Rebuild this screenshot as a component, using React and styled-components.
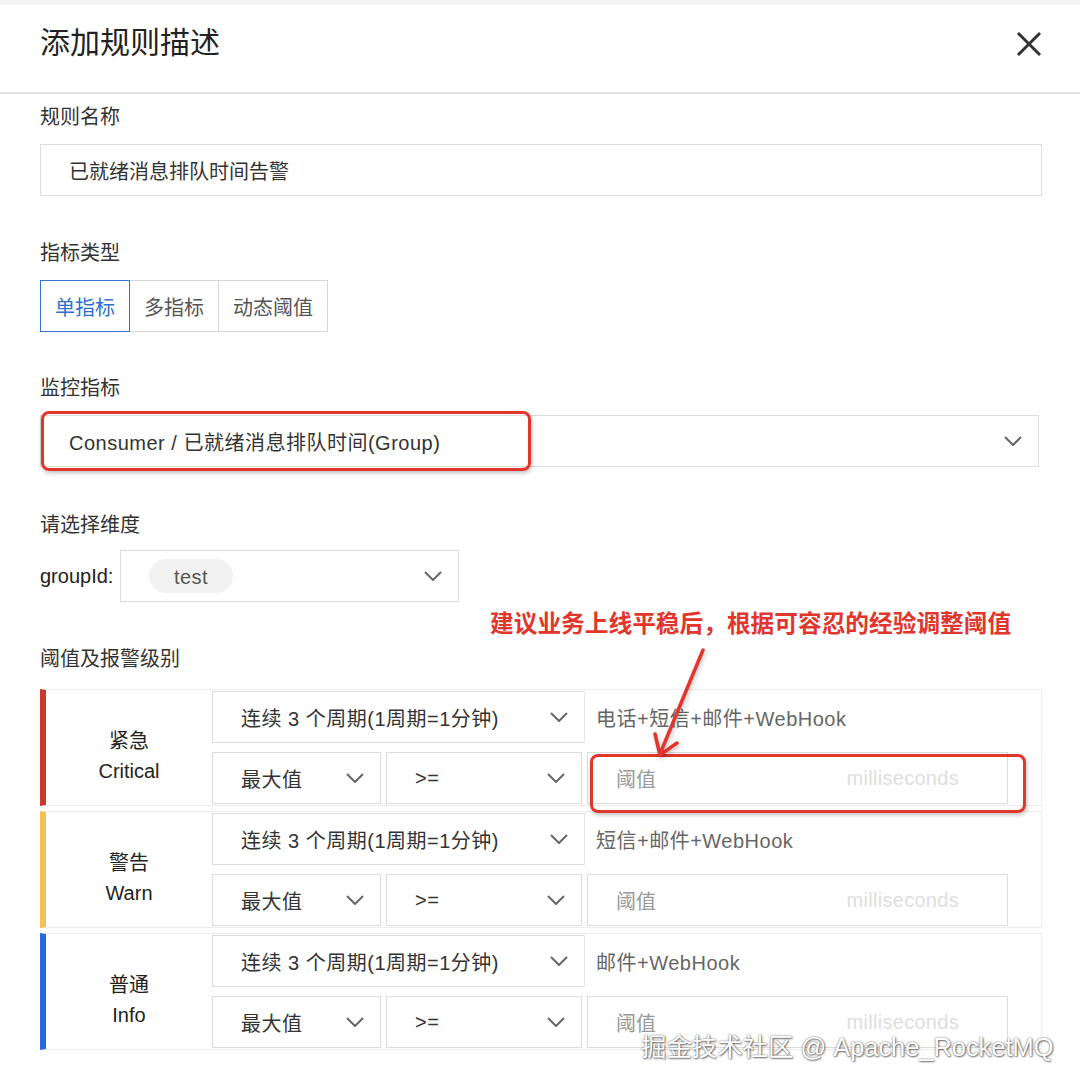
import React from "react";
import styled, { createGlobalStyle } from "styled-components";

const GlobalStyle = createGlobalStyle`
  body {
    margin: 0;
    background: #fff;
    font-family: "Liberation Sans", "Noto Sans CJK SC", sans-serif;
    color: #333;
  }
`;

const levels = [
  { cn: "紧急", en: "Critical", color: "#c73a30", notify: "电话+短信+邮件+WebHook" },
  { cn: "警告", en: "Warn", color: "#f4c158", notify: "短信+邮件+WebHook" },
  { cn: "普通", en: "Info", color: "#2b67dd", notify: "邮件+WebHook" },
];

const Chevron = () => (
  <svg width="18" height="10" viewBox="0 0 18 10">
    <polyline points="1,1 9,9 17,1" fill="none" stroke="#666" strokeWidth="2" />
  </svg>
);

const App = () => {
  return (
    <Page>
      <GlobalStyle />
      <TopStrip />
      <Header>
        <Title>添加规则描述</Title>
        <svg width="26" height="26" viewBox="0 0 26 26">
          <path d="M2 2 L24 24 M24 2 L2 24" stroke="#333" strokeWidth="3" />
        </svg>
      </Header>
      <Body>
        <Field $top={10}>
          <Label>规则名称</Label>
          <TextInput>已就绪消息排队时间告警</TextInput>
        </Field>

        <Field>
          <Label>指标类型</Label>
          <Segments>
            <Segment $active>单指标</Segment>
            <Segment>多指标</Segment>
            <Segment>动态阈值</Segment>
          </Segments>
        </Field>

        <Field $top={43}>
          <Label>监控指标</Label>
          <Select $width="999px">
            <span>Consumer / 已就绪消息排队时间(Group)</span>
            <Chevron />
          </Select>
        </Field>

        <Field $top={45}>
          <Label>请选择维度</Label>
          <DimRow>
            <DimLabel>groupId:</DimLabel>
            <Select $width="339px">
              <Tag>test</Tag>
              <Chevron />
            </Select>
          </DimRow>
        </Field>

        <Field>
          <Label>阈值及报警级别</Label>
          <Levels>
            {levels.map((l) => (
              <Level key={l.en} $color={l.color}>
                <LevelName>
                  <span>{l.cn}</span>
                  <span>{l.en}</span>
                </LevelName>
                <LevelBody>
                  <LevelRow>
                    <Select $width="373px">
                      <span>连续 3 个周期(1周期=1分钟)</span>
                      <Chevron />
                    </Select>
                    <Notify>{l.notify}</Notify>
                  </LevelRow>
                  <LevelRow $gap>
                    <Select $width="169px">
                      <span>最大值</span>
                      <Chevron />
                    </Select>
                    <Select $width="196px">
                      <span>&gt;=</span>
                      <Chevron />
                    </Select>
                    <ValueInput>
                      <Placeholder>阈值</Placeholder>
                      <Unit>milliseconds</Unit>
                    </ValueInput>
                  </LevelRow>
                </LevelBody>
              </Level>
            ))}
          </Levels>
        </Field>
      </Body>

      <Highlight $x={41} $y={411} $w={490} $h={60} />
      <Highlight $x={590} $y={754} $w={436} $h={59} />
      <Note>建议业务上线平稳后，根据可容忍的经验调整阈值</Note>
      <Arrow width="80" height="120" viewBox="640 640 80 120">
        <path
          d="M703 650 L660 754 M655 734 L660 755 L677 743"
          fill="none"
          stroke="#e2352b"
          strokeWidth="3.5"
          strokeLinecap="round"
          strokeLinejoin="round"
        />
      </Arrow>
      <Watermark>掘金技术社区 @ Apache_RocketMQ</Watermark>
    </Page>
  );
};

export default App;

const Page = styled.div`
  position: relative;
  width: 1080px;
  height: 1092px;
  overflow: hidden;
  background: #fff;
`;

const TopStrip = styled.div`
  height: 5px;
  background: #f4f4f4;
`;

const Header = styled.div`
  height: 87px;
  display: flex;
  align-items: center;
  justify-content: space-between;
  padding: 0 38px 0 40px;
  border-bottom: 2px solid #e2e2e2;
  svg {
    margin-top: -10px;
  }
`;

const Title = styled.div`
  font-size: 30px;
  line-height: 40px;
  color: #222;
  margin-top: -12px;
`;

const Body = styled.div`
  padding: 0 38px 0 40px;
`;

const Field = styled.div`
  margin-top: ${(p) => (p.$top !== undefined ? p.$top : 44)}px;
`;

const Label = styled.div`
  font-size: 20px;
  line-height: 26px;
  color: #333;
  margin-bottom: 14px;
`;

const TextInput = styled.div`
  height: 50px;
  border: 1px solid #dedede;
  display: flex;
  align-items: center;
  padding-left: 28px;
  font-size: 20px;
  color: #333;
`;

const Segments = styled.div`
  display: flex;
`;

const Segment = styled.div`
  height: 50px;
  padding: 0 14px;
  display: flex;
  align-items: center;
  font-size: 20px;
  color: ${(p) => (p.$active ? "#2f6fd0" : "#555")};
  border: 1px solid ${(p) => (p.$active ? "#3572d4" : "#d6d6d6")};
  position: relative;
  z-index: ${(p) => (p.$active ? 1 : 0)};
  & + & {
    margin-left: -1px;
  }
`;

const Select = styled.div`
  box-sizing: border-box;
  width: ${(p) => p.$width};
  height: 52px;
  border: 1px solid #dcdcdc;
  background: #fff;
  display: flex;
  align-items: center;
  justify-content: space-between;
  padding: 0 16px 0 28px;
  font-size: 20px;
  letter-spacing: 0.5px;
  color: #333;
  flex-shrink: 0;
`;

const DimRow = styled.div`
  display: flex;
  align-items: center;
  gap: 2px;
  margin-top: -2px;
`;

const DimLabel = styled.div`
  font-size: 20px;
  color: #222;
  width: 78px;
`;

const Tag = styled.div`
  width: 84px;
  height: 34px;
  border-radius: 17px;
  background: #f2f2f2;
  display: flex;
  align-items: center;
  justify-content: center;
  color: #555;
  font-size: 20px;
  padding-top: 3px;
  box-sizing: border-box;
`;

const Levels = styled.div`
  margin-top: 17px;
  display: flex;
  flex-direction: column;
  gap: 5px;
`;

const Level = styled.div`
  display: flex;
  width: 1002px;
  height: 117px;
  box-sizing: border-box;
  border: 1px solid #ececec;
  border-left: 6px solid ${(p) => p.$color};
`;

const LevelName = styled.div`
  width: 166px;
  display: flex;
  flex-direction: column;
  align-items: center;
  justify-content: center;
  padding-top: 16px;
  box-sizing: border-box;
  font-size: 20px;
  line-height: 30px;
  color: #222;
`;

const LevelBody = styled.div`
  flex: 1;
  display: flex;
  flex-direction: column;
  gap: 9px;
  padding-top: 1px;
`;

const LevelRow = styled.div`
  display: flex;
  gap: ${(p) => (p.$gap ? "5px" : "0")};
`;

const Notify = styled.div`
  flex: 1;
  padding: 12px 0 0 11px;
  font-size: 20px;
  letter-spacing: 0.5px;
  color: #666;
  border-left: 1px solid #e6e6e6;
  margin-left: -1px;
`;

const ValueInput = styled.div`
  width: 421px;
  height: 52px;
  box-sizing: border-box;
  border: 1px solid #dcdcdc;
  display: flex;
  align-items: center;
  padding: 0 48px 0 28px;
  font-size: 20px;
`;

const Placeholder = styled.span`
  color: #999;
`;

const Unit = styled.span`
  margin-left: auto;
  color: #dedede;
  letter-spacing: 0.3px;
`;

const Highlight = styled.div`
  position: absolute;
  left: ${(p) => p.$x}px;
  top: ${(p) => p.$y}px;
  width: ${(p) => p.$w}px;
  height: ${(p) => p.$h}px;
  box-sizing: border-box;
  border: 3.5px solid #e2352b;
  border-radius: 8px;
  box-shadow: 1px 2px 4px rgba(0, 0, 0, 0.25);
`;

const Note = styled.div`
  position: absolute;
  left: 490px;
  top: 608px;
  font-size: 23.7px;
  line-height: 32px;
  font-weight: bold;
  color: #e2352b;
  white-space: nowrap;
`;

const Arrow = styled.svg`
  position: absolute;
  left: 640px;
  top: 640px;
  filter: drop-shadow(1px 2px 2px rgba(0, 0, 0, 0.25));
`;

const Watermark = styled.div`
  position: absolute;
  left: 641px;
  top: 1030px;
  font-size: 25.4px;
  line-height: 34px;
  color: #fff;
  white-space: nowrap;
  text-shadow: 0 0 2px rgba(0, 0, 0, 0.6), 1px 1px 2px rgba(0, 0, 0, 0.5);
`;
